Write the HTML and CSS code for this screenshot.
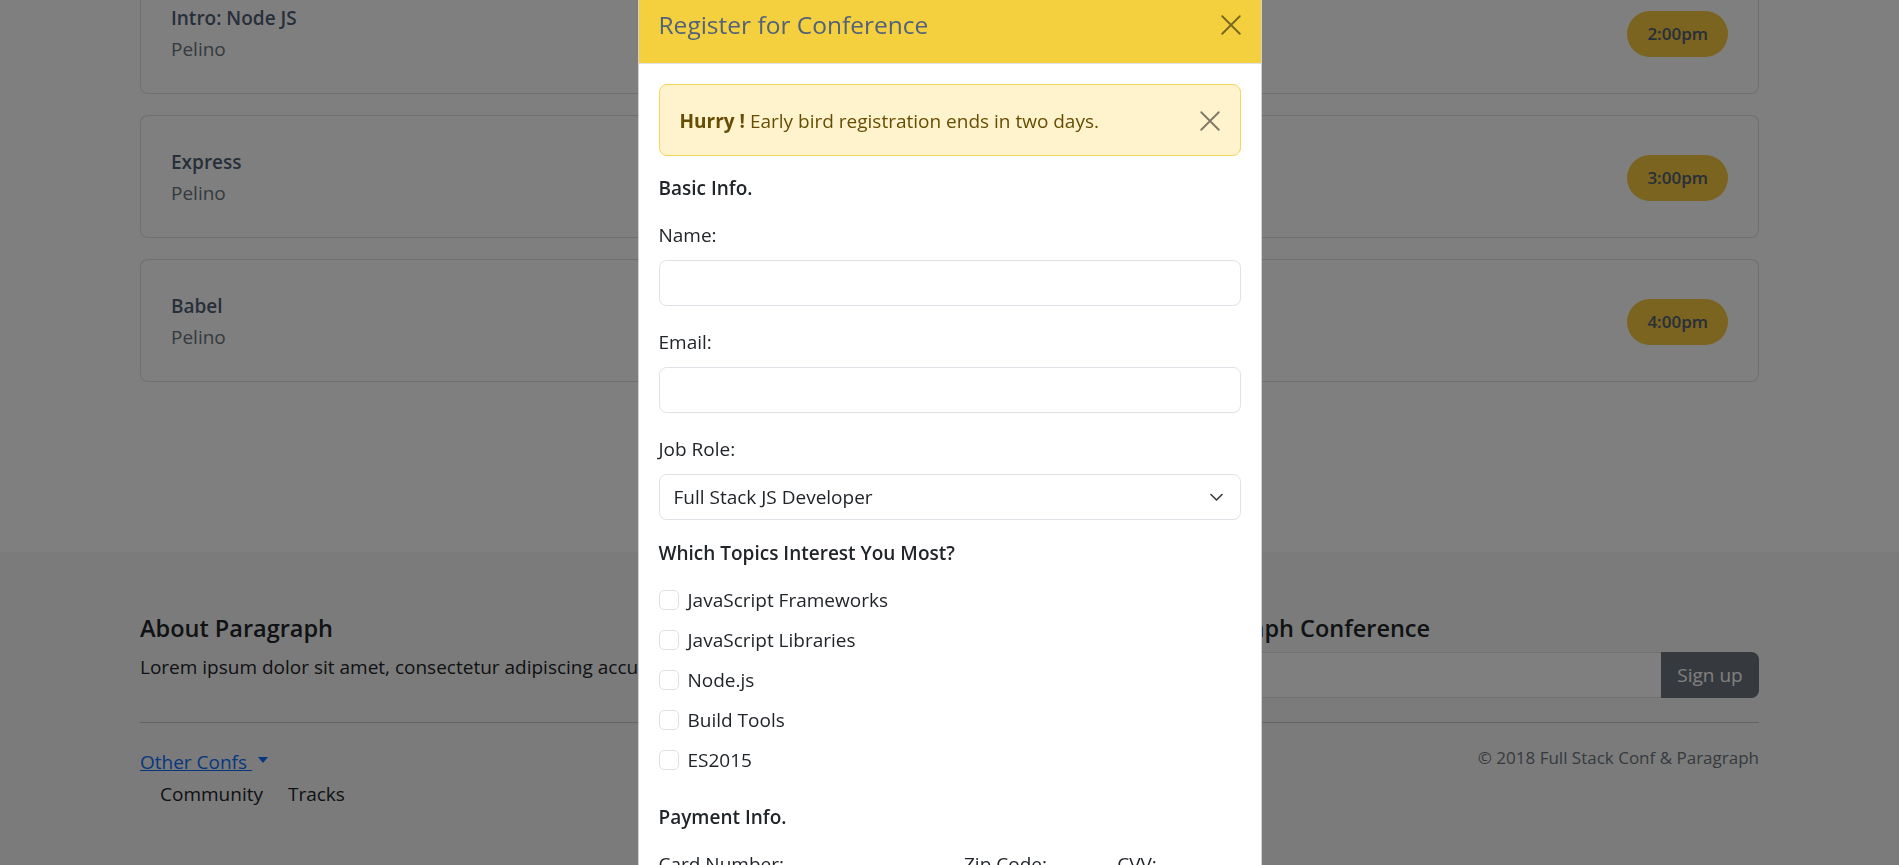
FILE: index.html
```html
<!DOCTYPE html>
<html lang="en">
<head>
<meta charset="utf-8">
<title>Full Stack Conf</title>
<link rel="stylesheet" href="styles.css">
</head>
<body>
<main class="schedule">
  <div class="container">
    <div class="session-card">
      <div class="session-info">
        <h5 class="session-title">Intro: Node JS</h5>
        <p class="session-speaker">Pelino</p>
      </div>
      <span class="time-badge">2:00pm</span>
    </div>
    <div class="session-card">
      <div class="session-info">
        <h5 class="session-title">Express</h5>
        <p class="session-speaker">Pelino</p>
      </div>
      <span class="time-badge">3:00pm</span>
    </div>
    <div class="session-card">
      <div class="session-info">
        <h5 class="session-title">Babel</h5>
        <p class="session-speaker">Pelino</p>
      </div>
      <span class="time-badge">4:00pm</span>
    </div>
  </div>
</main>

<footer class="site-footer">
  <div class="container">
    <div class="footer-top">
      <div class="footer-col">
        <h5 class="footer-heading">About Paragraph</h5>
        <p class="footer-text">Lorem ipsum dolor sit amet, consectetur adipiscing accusamus et iusto odio dignissimos.</p>
      </div>
      <div class="footer-col">
        <h5 class="footer-heading">Get Updates from Paragraph Conference</h5>
        <div class="signup-group">
          <input class="signup-input" type="email" aria-label="Email">
          <button class="signup-btn" type="button">Sign up</button>
        </div>
      </div>
    </div>
    <hr class="footer-rule">
    <div class="footer-bottom">
      <div class="footer-nav">
        <a class="dropdown-link" href="#">Other Confs </a>
        <ul class="footer-links">
          <li><a class="footer-link" href="#">Community</a></li>
          <li><a class="footer-link" href="#">Tracks</a></li>
        </ul>
      </div>
      <p class="copyright">© 2018 Full Stack Conf &amp; Paragraph</p>
    </div>
  </div>
</footer>

<div class="modal-backdrop"></div>

<div class="modal">
  <div class="modal-dialog">
    <div class="modal-header">
      <h5 class="modal-title">Register for Conference</h5>
      <button class="btn-close" type="button" aria-label="Close">
        <svg viewBox="0 0 16 16" width="20" height="20"><path d="M1 1L15 15M15 1L1 15" stroke="currentColor" stroke-width="1.5" stroke-linecap="round" fill="none"/></svg>
      </button>
    </div>
    <div class="modal-body">
      <div class="alert">
        <span><strong>Hurry !</strong> Early bird registration ends in two days.</span>
        <button class="btn-close" type="button" aria-label="Close">
          <svg viewBox="0 0 16 16" width="20" height="20"><path d="M1 1L15 15M15 1L1 15" stroke="currentColor" stroke-width="1.5" stroke-linecap="round" fill="none"/></svg>
        </button>
      </div>

      <h6 class="form-heading">Basic Info.</h6>
      <div class="form-group">
        <label class="form-label">Name:</label>
        <input class="form-control" type="text">
      </div>
      <div class="form-group">
        <label class="form-label">Email:</label>
        <input class="form-control" type="email">
      </div>
      <div class="form-group">
        <label class="form-label">Job Role:</label>
        <div class="select-wrap">
          <select class="form-control form-select">
            <option>Full Stack JS Developer</option>
          </select>
          <svg class="select-chevron" viewBox="0 0 13 9" width="13" height="9"><path d="M1 1.5L6.5 7L12 1.5" stroke="#343a40" stroke-width="1.6" stroke-linecap="round" stroke-linejoin="round" fill="none"/></svg>
        </div>
      </div>

      <h6 class="form-heading">Which Topics Interest You Most?</h6>
      <div class="check-list">
        <label class="check"><input class="check-input" type="checkbox">JavaScript Frameworks</label>
        <label class="check"><input class="check-input" type="checkbox">JavaScript Libraries</label>
        <label class="check"><input class="check-input" type="checkbox">Node.js</label>
        <label class="check"><input class="check-input" type="checkbox">Build Tools</label>
        <label class="check"><input class="check-input" type="checkbox">ES2015</label>
      </div>

      <h6 class="form-heading">Payment Info.</h6>
      <div class="pay-row">
        <div class="pay-col">
          <label class="form-label">Card Number:</label>
          <input class="form-control" type="text">
        </div>
        <div class="pay-col">
          <label class="form-label">Zip Code:</label>
          <input class="form-control" type="text">
        </div>
        <div class="pay-col">
          <label class="form-label">CVV:</label>
          <input class="form-control" type="text">
        </div>
      </div>
    </div>
  </div>
</div>
</body>
</html>
```

FILE: styles.css
```css
* {
  box-sizing: border-box;
}

html {
  overflow: hidden;
}

body {
  margin: 0;
  font-family: "Open Sans", "Noto Sans", sans-serif;
  font-size: 19px;
  line-height: 30px;
  color: #212529;
  background: #ffffff;
}

.container {
  width: 1619px;
  margin: 0 auto;
}

/* ---------- schedule ---------- */
.schedule {
  margin-top: -29px;
  padding-bottom: 149px;
}

.session-card {
  display: flex;
  align-items: center;
  justify-content: space-between;
  padding: 31px 30px 29px;
  border: 1px solid rgba(0, 0, 0, 0.125);
  border-radius: 8px;
  margin-bottom: 21px;
  background: #ffffff;
}

.session-title {
  margin: 0;
  font-size: 19px;
  font-weight: 600;
  line-height: 31px;
  color: #4f5f74;
}

.session-speaker {
  margin: 0;
  color: #6c757d;
}

.time-badge {
  font-size: 17px;
  font-weight: 600;
  line-height: 26px;
  padding: 10px 20px;
  border-radius: 999px;
  background: #f4c840;
  color: #4f5f74;
}

/* ---------- footer ---------- */
.site-footer {
  background: #f7f7f7;
  padding: 62px 0 90px;
}

.footer-top {
  display: grid;
  grid-template-columns: 1fr 1fr;
  column-gap: 36px;
}

.footer-heading {
  margin: 0 0 10px;
  font-size: 23.5px;
  font-weight: 600;
  line-height: 28px;
  color: #212529;
}

.footer-text {
  margin: 0 0 20px;
  white-space: nowrap;
}

.signup-group {
  display: flex;
  height: 46px;
}

.signup-input {
  flex: 1;
  min-width: 0;
  border: 1px solid #dee2e6;
  border-right: 0;
  border-radius: 7.5px 0 0 7.5px;
  background: #ffffff;
  font: inherit;
}

.signup-btn {
  width: 98px;
  border: 0;
  border-radius: 0 7.5px 7.5px 0;
  background: #6c757d;
  color: #ffffff;
  font: inherit;
  padding: 0 15px;
}

.footer-rule {
  margin: 20px 0;
  border: 0;
  border-top: 1px solid rgba(33, 37, 41, 0.22);
}

.footer-bottom {
  display: flex;
  justify-content: space-between;
  align-items: flex-start;
}

.footer-nav {
  padding-top: 4px;
}

.dropdown-link {
  color: #0d6efd;
  text-decoration: underline;
}

.dropdown-link::after {
  content: "";
  display: inline-block;
  margin-left: 6px;
  vertical-align: 6.5px;
  border-top: 6px solid #0d6efd;
  border-left: 5px solid transparent;
  border-right: 5px solid transparent;
}

.footer-links {
  list-style: none;
  margin: 2px 0 0;
  padding: 0 0 0 20px;
  display: flex;
  gap: 25px;
}

.footer-link {
  color: #212529;
  text-decoration: none;
}

.copyright {
  margin: 0;
  font-size: 17px;
  color: #6c757d;
}

/* ---------- modal ---------- */
.modal-backdrop {
  position: fixed;
  inset: 0;
  background: #000000;
  opacity: 0.5;
  z-index: 10;
}

.modal {
  position: fixed;
  inset: 0;
  z-index: 20;
  overflow: hidden;
}

.modal-dialog {
  width: 624px;
  margin: -18px auto 0;
  background: #ffffff;
  border: 1px solid rgba(0, 0, 0, 0.175);
  border-radius: 8px;
}

.modal-header {
  display: flex;
  align-items: center;
  justify-content: space-between;
  padding: 22px 20px 18px;
  background: #f4d03f;
  border-bottom: 1px solid #dee2e6;
  border-radius: 7px 7px 0 0;
}

.modal-title {
  margin: 0;
  font-size: 24.5px;
  font-weight: 500;
  line-height: 40px;
  color: #52627a;
}

.btn-close {
  display: flex;
  width: 20px;
  height: 20px;
  padding: 0;
  border: 0;
  background: transparent;
  color: #000000;
  opacity: 0.5;
}

.modal-body {
  padding: 20px;
}

.alert {
  display: flex;
  align-items: center;
  justify-content: space-between;
  padding: 21px 20px 19px;
  margin-bottom: 20px;
  border: 1px solid #f5d55a;
  border-radius: 8px;
  background: #fff3cd;
  color: #664d03;
}

.alert strong {
  font-weight: 700;
}

.form-heading {
  margin: 0 0 20px;
  font-size: 19px;
  font-weight: 600;
  line-height: 24px;
  color: #212529;
}

.form-group {
  margin-bottom: 21px;
}

.form-label {
  display: block;
  margin-bottom: 10px;
}

.form-control {
  display: block;
  width: 100%;
  height: 46px;
  padding: 0 14px;
  font: inherit;
  color: #212529;
  background: #ffffff;
  border: 1px solid #dee2e6;
  border-radius: 7.5px;
}

.select-wrap {
  position: relative;
}

.form-select {
  appearance: none;
  -webkit-appearance: none;
}

.select-chevron {
  position: absolute;
  right: 18px;
  top: 50%;
  margin-top: -4.5px;
  pointer-events: none;
}

.check-list {
  margin-bottom: 30px;
}

.check {
  display: flex;
  align-items: flex-start;
  margin-bottom: 10px;
}

.check-input {
  appearance: none;
  -webkit-appearance: none;
  flex: none;
  width: 20px;
  height: 20px;
  margin: 5px 9px 0 0;
  border: 1px solid #dee2e6;
  border-radius: 5px;
  background: #ffffff;
}

.pay-row {
  display: grid;
  grid-template-columns: 275.5px 1fr 1fr;
  column-gap: 30px;
}
```
